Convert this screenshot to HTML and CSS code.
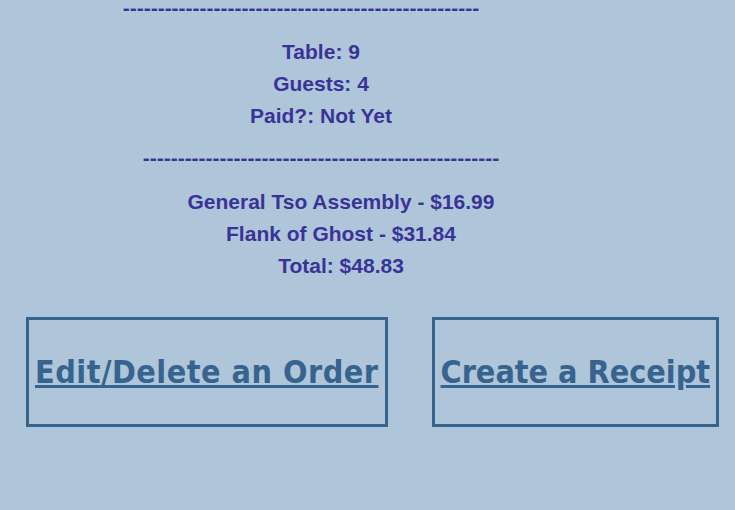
FILE: index.html
```html
<!DOCTYPE html>
<html>
<head>
<meta charset="utf-8">
<link rel="stylesheet" href="styles.css">
</head>
<body>
<div class="receipt">
  <p class="dash dash-first">---------------------------------------------------</p>
  <div class="block">
    <p>Table: 9</p>
    <p>Guests: 4</p>
    <p>Paid?: Not Yet</p>
  </div>
  <p class="dash dash-second">---------------------------------------------------</p>
  <div class="block block-items">
    <p>General Tso Assembly - $16.99</p>
    <p>Flank of Ghost - $31.84</p>
    <p>Total: $48.83</p>
  </div>
</div>
<div class="actions">
  <div class="action action-wide"><a href="#">Edit/Delete an Order</a></div>
  <div class="action"><a href="#">Create a Receipt</a></div>
</div>
</body>
</html>
```

FILE: styles.css
```css
html, body {
  margin: 0;
  padding: 0;
  background: #afc5d9;
}
body {
  width: 735px;
  height: 510px;
  overflow: hidden;
}
.receipt {
  width: 642px;
  font-family: "Liberation Sans", Arial, sans-serif;
  font-weight: bold;
  font-size: 21px;
  color: #3a3397;
  text-align: center;
}
.receipt p {
  margin: 0;
  line-height: 32px;
  white-space: nowrap;
}
.receipt p.dash {
  line-height: 16px;
}
.receipt p.dash-first {
  padding-right: 40px;
}
.receipt .block {
  margin-top: 20px;
}
.receipt .block-items {
  padding-left: 40px;
}
.receipt p.dash-second {
  margin-top: 18px;
}
.actions {
  display: flex;
  gap: 44px;
  margin-top: 35px;
  padding-left: 26px;
}
.action {
  height: 104px;
  border: 3px solid #36648f;
  padding: 0 6px;
  display: flex;
  align-items: center;
}
.action a {
  font-family: "DejaVu Sans Condensed", "DejaVu Sans", sans-serif;
  font-stretch: condensed;
  font-weight: bold;
  font-size: 32px;
  color: #36648f;
  text-decoration: underline;
  white-space: nowrap;
}
.action-wide a {
  letter-spacing: 0.5px;
}
```
